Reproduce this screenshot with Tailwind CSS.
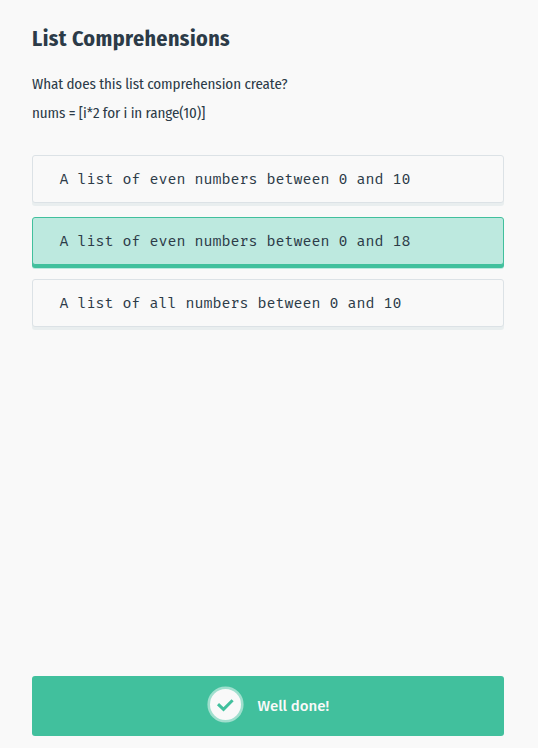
<!DOCTYPE html>
<html lang="en">
<head>
<meta charset="utf-8">
<title>List Comprehensions</title>
<script src="https://cdn.jsdelivr.net/npm/@tailwindcss/browser@4"></script>
</head>
<body class="bg-[#f9f9f9] text-[#2c3b48] font-['Fira_Sans','Noto_Sans',sans-serif]">
<main class="flex h-[748px] flex-col pl-8 pr-[34px] pt-[23px] pb-3">
  <h1 class="h-8 whitespace-nowrap font-['Fira_Sans_Condensed','Fira_Sans',sans-serif] text-[22px] leading-8 font-bold tracking-[0.4px]">List Comprehensions</h1>
  <div class="mt-[15px] whitespace-nowrap font-['Fira_Sans_Condensed','Fira_Sans',sans-serif] text-[15px] leading-[29px] tracking-[-0.1px]">
    <p>What does this list comprehension create?</p>
    <p>nums = [i*2 for i in range(10)]</p>
  </div>
  <div class="mt-[27px] flex flex-col gap-[14px] whitespace-pre font-['Fira_Mono','DejaVu_Sans_Mono',monospace] text-[15px]">
    <button class="flex h-12 items-center rounded-[3px] border border-[#dce2e6] bg-[#f9f9f9] pl-[26.5px] shadow-[0_3px_0_#e9eeef]">A list of even numbers between 0 and 10</button>
    <button class="flex h-12 items-center rounded-[3px] border border-[#41c09d] bg-[#bde9df] pl-[26.5px] shadow-[0_3px_0_#41c09d,0_4px_0_#bde9df]">A list of even numbers between 0 and 18</button>
    <button class="flex h-12 items-center rounded-[3px] border border-[#dce2e6] bg-[#f9f9f9] pl-[26.5px] shadow-[0_3px_0_#e9eeef]">A list of all numbers between 0 and 10</button>
  </div>
  <div class="mt-auto flex h-[60px] items-center rounded-[3px] bg-[#41c09d] pl-[175px] text-[#f9f9f9]">
    <svg class="-mt-[3px] size-9.25 shrink-0" viewBox="0 0 37 37" fill="none">
      <circle cx="18.5" cy="18.5" r="16.8" fill="#f9f9f9" stroke="#a0dfce" stroke-width="2.6"/>
      <path d="M11 18.2L16.5 23.4L25.6 14.2" stroke="#41c09d" stroke-width="3"/>
    </svg>
    <span class="ml-[13.5px] whitespace-nowrap text-[15px] font-medium">Well done!</span>
  </div>
</main>
</body>
</html>
